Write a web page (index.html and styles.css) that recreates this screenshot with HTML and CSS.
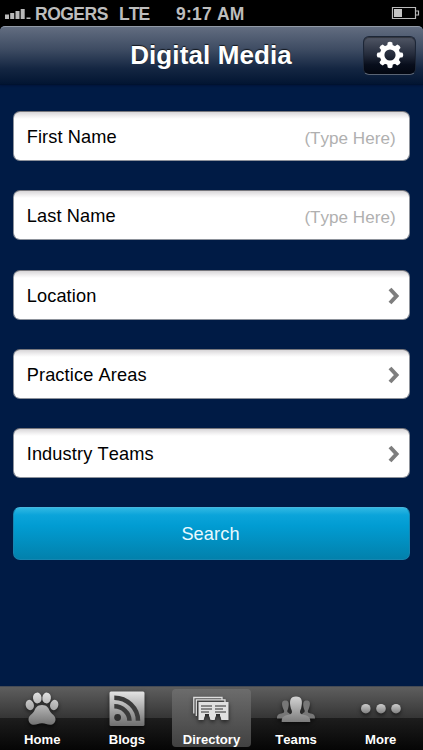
FILE: index.html
```html
<!DOCTYPE html>
<html lang="en">
<head>
<meta charset="utf-8">
<title>Digital Media</title>
<link rel="stylesheet" href="styles.css">
</head>
<body>
<div class="app">
  <div class="status">
    <svg class="signal" width="27" height="12" viewBox="0 0 27 12" fill="#b9b9b9"><path d="M0 6.500h4V11H0zM5.200 5h4v6h-4zM10.500 3h4v8h-4zM15.700 1h4v10h-4zM21.500 9.500h4V11h-4z"/></svg>
    <span class="carrier">ROGERS</span>
    <span class="network">LTE</span>
    <span class="time">9:17 AM</span>
    <svg class="battery" width="29" height="15" viewBox="0 0 29 15"><path d="M1.500 1.500h23v11h-23z" fill="none" stroke="#b9b9b9" stroke-width="1.200"/><path d="M3 3h8v8H3z" fill="#c4c4c4"/><path d="M25 5h2.500v4H25" fill="none" stroke="#b9b9b9" stroke-width="1.200"/></svg>
  </div>
  <header class="header">
    <h1 class="title">Digital Media</h1>
    <button class="settings" aria-label="Settings">
      <svg width="28" height="28" viewBox="-14 -14 28 28">
        <g fill="#fff"><path id="tooth" d="M-3-8-2.300-12.600Q0-14 2.300-12.600L3-8z"/><use href="#tooth" transform="rotate(45)"/><use href="#tooth" transform="rotate(90)"/><use href="#tooth" transform="rotate(135)"/><use href="#tooth" transform="rotate(180)"/><use href="#tooth" transform="rotate(225)"/><use href="#tooth" transform="rotate(270)"/><use href="#tooth" transform="rotate(315)"/></g>
        <circle r="7.900" fill="none" stroke="#fff" stroke-width="4.600"/>
      </svg>
    </button>
  </header>
  <main class="form">
    <label class="field"><span>First Name</span><span class="hint">(Type Here)</span></label>
    <label class="field"><span>Last Name</span><span class="hint">(Type Here)</span></label>
    <div class="field"><span>Location</span><svg class="chevron" width="12" height="18" viewBox="0 0 12 18"><path d="M2 2l6.500 7L2 16"/></svg></div>
    <div class="field"><span>Practice Areas</span><svg class="chevron" width="12" height="18" viewBox="0 0 12 18"><path d="M2 2l6.500 7L2 16"/></svg></div>
    <div class="field"><span>Industry Teams</span><svg class="chevron" width="12" height="18" viewBox="0 0 12 18"><path d="M2 2l6.500 7L2 16"/></svg></div>
    <button class="search">Search</button>
  </main>
  <nav class="tabs">
    <a class="tab">
      <svg class="icon" width="40" height="40" viewBox="0 0 40 40">
        <defs><linearGradient id="silver" gradientUnits="userSpaceOnUse" x1="0" y1="2" x2="0" y2="38"><stop offset="0" stop-color="#e6e6e6"/><stop offset="1" stop-color="#6b6b6b"/></linearGradient></defs>
        <g fill="url(#silver)"><ellipse cx="15.300" cy="9" rx="4.300" ry="5.400" transform="rotate(-7 15.300 9)"/><ellipse cx="24.600" cy="9" rx="4.300" ry="5.400" transform="rotate(7 24.600 9)"/><ellipse cx="7.800" cy="16" rx="4.100" ry="5.300" transform="rotate(-15 7.800 16)"/><ellipse cx="32.200" cy="16" rx="4.100" ry="5.300" transform="rotate(15 32.200 16)"/><path d="M20 16c5 0 6.500 3 7.800 6 1.400 3 5.700 4.400 5.700 8.500 0 3-2.400 5.300-5.500 5.300-3 0-4.600-1.500-8-1.500s-5 1.500-8 1.500c-3.100 0-5.500-2.300-5.500-5.300 0-4.100 4.300-5.500 5.700-8.500 1.300-3 2.800-6 7.800-6z"/></g>
      </svg>
      <span>Home</span>
    </a>
    <a class="tab">
      <svg class="icon" width="40" height="40" viewBox="0 0 40 40">
        <rect x="2.500" y="2.500" width="35" height="34.500" rx="1.500" fill="url(#silver)"/>
        <g fill="none" stroke="#3b3b3b" stroke-width="4.500"><path d="M7.300 8.700C20 8.700 31 19 31 31.700M7.300 17.300C15.500 17.300 22.500 24 22.500 31.700"/></g><circle cx="10.600" cy="28.500" r="3.400" fill="#303030"/>
      </svg>
      <span>Blogs</span>
    </a>
    <a class="tab active">
      <svg class="icon" width="40" height="40" viewBox="0 0 40 40">
        <g fill="none" stroke="#dedede" stroke-width="1.300"><path d="M2.800 24.500V8.500H31v2M5.300 27V10.800H34V13"/></g>
        <path d="M7.500 13h30v18h-7.200l-.8-3.500H29V25h-4v2.500h-.5l-.8 3.500h-2.400l-2-.2-.8-3.300H18V25h-4v2.500h-.5l-.8 3.500H7.500z" fill="#e0e0e0"/>
        <path d="M10 17h11M10 20h11M10 23h8M24 17h11M24 20h8M24 23h11" stroke="#6a6a6a" stroke-width="1.300"/>
      </svg>
      <span>Directory</span>
    </a>
    <a class="tab">
      <svg class="icon" width="40" height="40" viewBox="0 0 40 40">
        <g fill="#777"><path id="side" d="M1 29.500c0-3.500 1-4.500 6-5.500 1.500-.4 1.500-2 .3-4C5 14 6 11.500 9.300 11.500S13.700 14 12 20c-1.200 2-1 3.500 1 4l4 5.500z"/><use href="#side" transform="matrix(-1 0 0 1 40 0)"/></g>
        <path d="M5.700 33c0-5 1.300-6 8-7.500 3-.8 2.600-3.400 1.200-6C13 12 14 7.500 20 7.500S27 12 25.100 19.500c-1.400 2.600-1.800 5.200 1.200 6 6.700 1.500 8 2.500 8 7.500z" fill="url(#silver)"/>
      </svg>
      <span>Teams</span>
    </a>
    <a class="tab">
      <svg class="icon" width="40" height="40" viewBox="0 0 40 40">
        <defs><linearGradient id="dot" x1="0" y1="0" x2="0" y2="1"><stop offset="0" stop-color="#cdcdcd"/><stop offset="1" stop-color="#808080"/></linearGradient></defs>
        <g fill="url(#dot)"><circle cx="4.800" cy="19.700" r="4.800"/><circle cx="20" cy="19.700" r="4.800"/><circle cx="35" cy="19.700" r="4.800"/></g>
      </svg>
      <span>More</span>
    </a>
  </nav>
</div>
</body>
</html>
```
FILE: styles.css
```css
* { box-sizing: border-box; }
body {
  margin: 0;
  background: #000;
  font-family: "Liberation Sans", Arial, sans-serif;
  font-kerning: none;
}
.app {
  width: 423px;
  height: 750px;
  display: flex;
  flex-direction: column;
  background: #001b45;
  overflow: hidden;
}
.status {
  height: 26px;
  flex: none;
  display: flex;
  align-items: center;
  padding: 1px 3px 0 5px;
  background: #000;
  color: #bdbdbd;
  font-size: 17.500px;
  font-weight: bold;
  line-height: 24px;
  white-space: nowrap;
}
.signal { margin-right: 3px; margin-top: 1px; }
.carrier { width: 84px; letter-spacing: -.5px; }
.network { width: 57px; letter-spacing: -1px; }
.time { letter-spacing: .2px; }
.battery { margin-left: auto; margin-top: -1px; }
.header {
  height: 59px;
  flex: none;
  display: grid;
  grid-template-columns: 53px 1fr 53px;
  align-items: center;
  justify-items: center;
  padding: 0 7px 1px 6px;
  border-top: 1px solid #929aa6;
  border-bottom: 1px solid #00122f;
  border-radius: 5px 5px 0 0;
  background: linear-gradient(#626d80, #3d4b62 40%, #142642 73%, #021532);
  box-shadow: 0 -6px 0 #000, 0 1px 2px #00143a;
}
.title {
  grid-column: 2;
  margin: 0;
  color: #fff;
  font-size: 26px;
  line-height: 32px;
  letter-spacing: .1px;
  white-space: nowrap;
  text-shadow: 0 -1px 1px rgba(0, 0, 0, .7);
}
.settings {
  width: 53px;
  height: 39px;
  display: grid;
  place-items: center;
  padding: 0;
  border: 1px solid #1c2637;
  border-bottom-color: #5a6474;
  border-radius: 6px;
  background: linear-gradient(#515766, #242b3b 48%, #080e1c 75%, #020610);
  box-shadow: inset 0 1px 1px rgba(0, 0, 0, .4);
}
.form {
  flex: 1;
  display: flex;
  flex-direction: column;
  gap: 29.250px;
  padding: 26px 13.400px 0;
}
.field {
  height: 50px;
  flex: none;
  display: flex;
  align-items: center;
  justify-content: space-between;
  padding: 1px 13px 0;
  border: 1px solid #8d929b;
  border-top-color: #77777c;
  border-radius: 7px;
  background: linear-gradient(#d8d6d8, #f0eff0 4px, #fff 7px);
  color: #000;
  font-size: 18.200px;
  line-height: 24px;
  white-space: nowrap;
}
div.field { padding-top: 2px; }
.field > span:first-child { margin-left: -.7px; letter-spacing: .12px; }
.hint {
  margin-top: 4px;
  color: #b0b0b0;
  font-size: 17.100px;
}
.chevron {
  margin: 0 -4px 0 0;
  fill: none;
  stroke: #7e7e7e;
  stroke-width: 4;
}
.search {
  height: 53px;
  padding: 1px 2px 0 0;
  border: 1px solid #1785b0;
  border-top-color: #46b6dd;
  border-radius: 7px;
  background: linear-gradient(#30b8e3, #0ba4da 7px, #019cd2 35%, #0281ac);
  color: #e9faff;
  font: 18.200px/24px "Liberation Sans", Arial, sans-serif;
  letter-spacing: .1px;
}
.tabs {
  height: 64px;
  flex: none;
  display: grid;
  grid-template-columns: repeat(5, 1fr);
  align-items: start;
  justify-items: center;
  padding-top: 2px;
  border-top: 1px solid #454b55;
  background: linear-gradient(#5e5e5e, #353535 31px, #1d1d1d 31px, #050505);
}
.tab {
  width: 79px;
  height: 58px;
  display: flex;
  flex-direction: column;
  align-items: center;
  border-radius: 4px;
  color: #fff;
  font-size: 13.100px;
  font-weight: bold;
  line-height: 16px;
}
.tab.active { background: linear-gradient(#6c6c6c, #565656 50%, #414141); }
.icon {
  flex: none;
  margin-bottom: 3px;
  filter: drop-shadow(0 2px 2px rgba(0, 0, 0, .6));
}
```
